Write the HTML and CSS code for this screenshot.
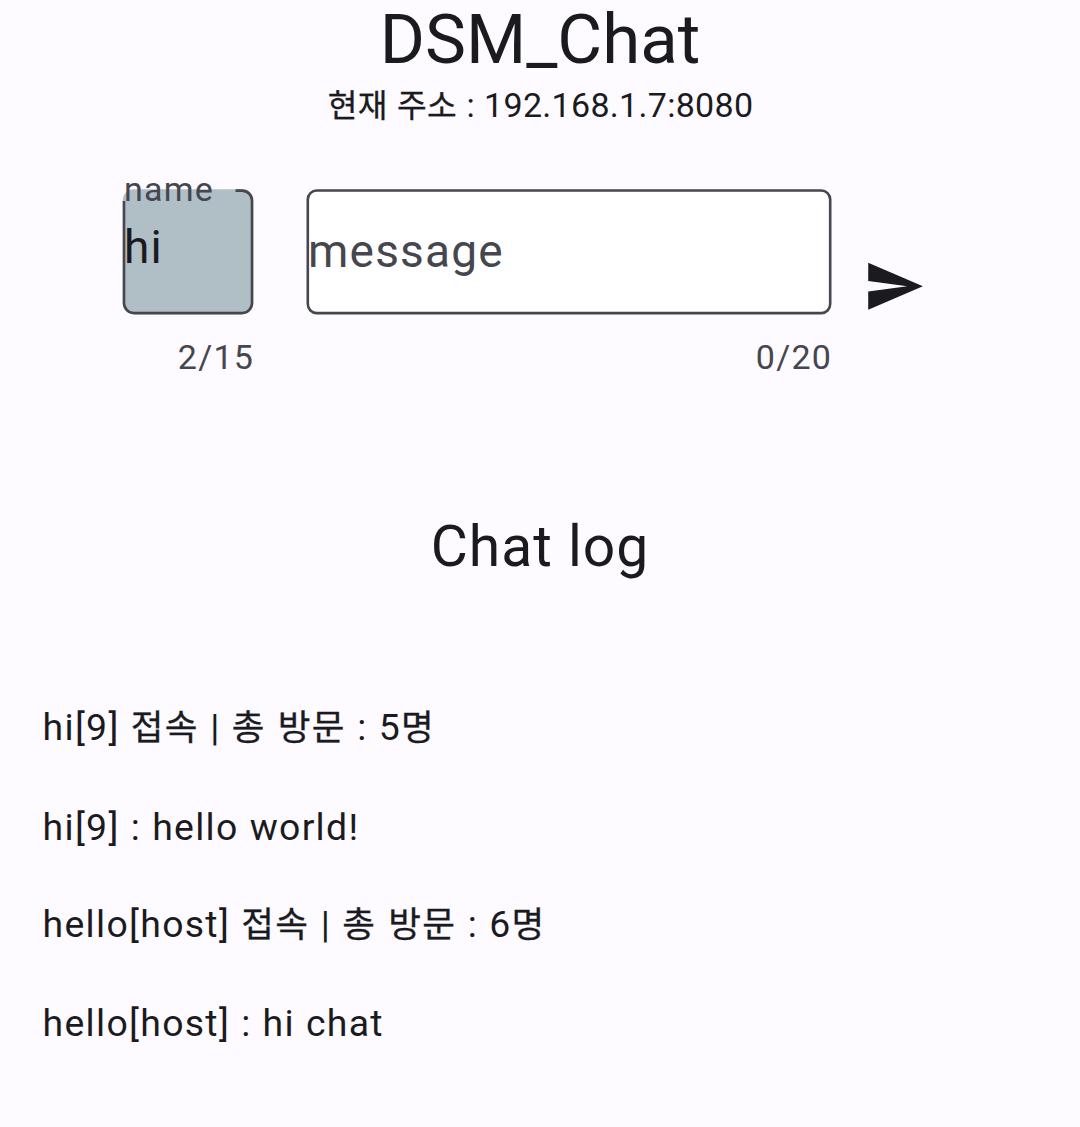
FILE: index.html
```html
<!DOCTYPE html>
<html lang="ko">
<head>
<meta charset="utf-8">
<title>DSM_Chat</title>
<link rel="stylesheet" href="styles.css">
</head>
<body>
<main class="app">
  <header class="header">
    <h1 class="title">DSM_Chat</h1>
    <p class="address"><span class="ko">현재 주소</span> : 192.168.1.7:8080</p>
  </header>
  <section class="form">
    <div class="field field-name">
      <div class="box">
        <svg class="outline" viewBox="0 0 132 126" aria-hidden="true">
          <rect class="fill-name" x="0.8" y="0.3" width="130.5" height="125" rx="11"/>
          <path class="stroke" d="M2 12V114.1a10 10 0 0 0 10 10H120a10 10 0 0 0 10-10V11.6a10 10 0 0 0-10-10H113.5"/>
        </svg>
        <span class="label">name</span>
        <span class="value">hi</span>
      </div>
      <span class="counter">2/15</span>
    </div>
    <div class="field field-message">
      <div class="box">
        <svg class="outline" viewBox="0 0 526 126" aria-hidden="true">
          <rect class="fill-message stroke" x="1.8" y="1.5" width="522.4" height="122.6" rx="9"/>
        </svg>
        <span class="placeholder">message</span>
      </div>
      <span class="counter">0/20</span>
    </div>
    <svg class="send" viewBox="0 0 24 24" role="img" aria-label="send"><path d="M2.01 21 23 12 2.01 3 2 10l15 2-15 2z"/></svg>
  </section>
  <h2 class="log-title">Chat log</h2>
  <ul class="log">
    <li>hi[9] <span class="ko">접속</span> | <span class="ko">총 방문</span> : 5<span class="ko">명</span></li>
    <li>hi[9] : hello world!</li>
    <li>hello[host] <span class="ko">접속</span> | <span class="ko">총 방문</span> : 6<span class="ko">명</span></li>
    <li>hello[host] : hi chat</li>
  </ul>
</main>
</body>
</html>
```
FILE: styles.css
```css
* { box-sizing: border-box; margin: 0; padding: 0; }
body {
  background: #fdfbff;
  color: #1b1b1f;
  font-family: Roboto, "Noto Sans CJK KR", sans-serif;
}
.app { height: 1127px; overflow: hidden; }
.ko { font-size: 0.95em; line-height: 1; word-spacing: 2px; margin-right: 0.5px; -webkit-text-stroke: 0.3px currentColor; }
.header { text-align: center; }
.title { font-size: 69px; line-height: 79px; font-weight: 400; }
.address { font-size: 34px; line-height: 50px; margin-top: 1px; letter-spacing: 0.3px; word-spacing: 0.3px; padding-left: 1px; }
.address .ko { word-spacing: 1px; }
.form { display: flex; align-items: flex-start; margin-top: 59px; padding-left: 122px; }
.field { display: flex; flex-direction: column; }
.field-name { width: 132px; }
.field-message { width: 526px; margin-left: 52px; }
.box { position: relative; height: 126px; display: flex; flex-direction: column; }
.outline { position: absolute; inset: 0; width: 100%; height: 100%; }
.stroke { stroke: #46464f; stroke-width: 2.6; }
path.stroke { fill: none; }
.fill-name { fill: #b0bec5; }
.fill-message { fill: #fff; }
.label, .value, .placeholder { position: relative; padding-left: 2px; }
.label { color: #46464f; font-size: 34px; line-height: 40px; letter-spacing: 1.2px; margin-top: -20px; }
.value { font-size: 46px; line-height: 54px; letter-spacing: 1.2px; margin-top: 11px; }
.placeholder { color: #46464f; font-size: 46px; line-height: 54px; letter-spacing: 1.2px; margin-top: 35px; }
.counter { align-self: flex-end; color: #46464f; font-size: 34px; line-height: 40px; letter-spacing: 1.2px; margin-top: 22px; }
.send { width: 62.5px; height: 62.5px; margin: 66.4px 0 0 31.1px; fill: #1b1b1f; }
.log-title { margin-top: 136px; font-size: 57px; line-height: 68px; font-weight: 400; letter-spacing: 1px; text-align: center; }
.log { list-style: none; margin-top: 115.5px; padding-left: 42.6px; display: grid; grid-template-rows: 100px 97px 99px 60px; }
.log li { font-size: 37.4px; line-height: 60px; letter-spacing: 1.3px; word-spacing: 0.5px; }
```
